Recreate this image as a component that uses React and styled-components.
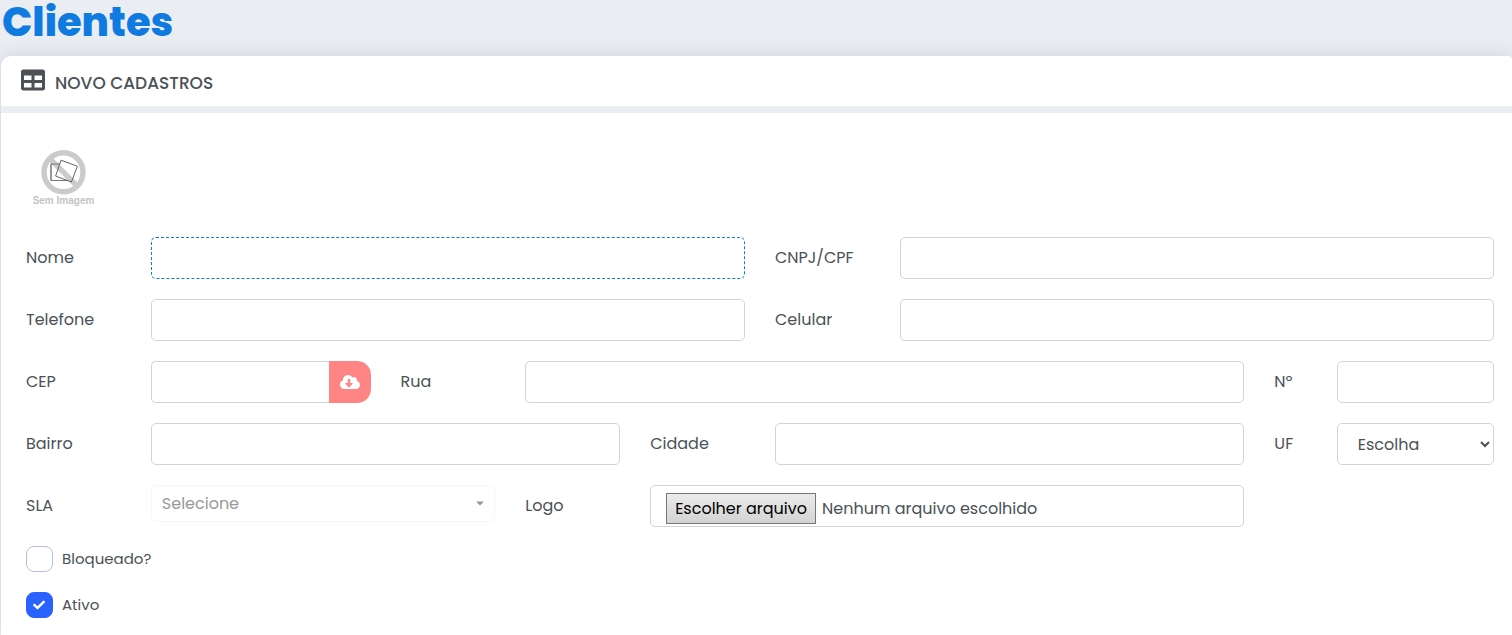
import React from "react";
import styled, { createGlobalStyle } from "styled-components";
import { FaTable, FaCloudDownloadAlt, FaCheck, FaCaretDown } from "react-icons/fa";

const theme = {
  page: "#eaedf2",
  white: "#ffffff",
  primary: "#0f7ae0",
  blue: "#2962ff",
  danger: "#ff8585",
  text: "#4b5157",
  border: "#ced4da",
  muted: "#999999",
};

const GlobalStyle = createGlobalStyle`
  *, *::before, *::after {
    box-sizing: border-box;
  }
  body {
    margin: 0;
    background: ${theme.page};
    color: ${theme.text};
    font-family: Poppins, Inter, "Liberation Sans", sans-serif;
    font-size: 16px;
    line-height: 24px;
  }
  input, select, button {
    font: inherit;
    color: inherit;
  }
`;

const PageTitle = styled.h1`
  margin: 0;
  padding: 0 2px 12px;
  color: ${theme.primary};
  font-size: 40px;
  font-weight: 800;
  line-height: 44px;
`;

const Card = styled.section`
  margin-left: 1px;
  border-radius: 10px 4px 0 0;
  background: ${theme.white};
  box-shadow: 0 0 20px rgba(8, 21, 66, 0.12);
`;

const CardHeader = styled.header`
  display: flex;
  align-items: center;
  gap: 10px;
  height: 57px;
  padding: 0 20px 2px;
  border-bottom: 7px solid ${theme.page};
`;

const CardTitle = styled.h2`
  margin: 0;
  padding-top: 6px;
  font-size: 17px;
  font-weight: 500;
  text-transform: uppercase;
`;

const CardBody = styled.form`
  padding: 34px 3px 17px 10px;
`;

const Picture = styled.svg`
  display: block;
  width: 66px;
  height: 66px;
  margin: 0 0 24px 20px;
`;

const Rows = styled.div`
  display: grid;
  gap: 20px;
`;

const Row = styled.div`
  display: grid;
  grid-template-columns: repeat(24, 1fr);
`;

const Cell = styled.div`
  grid-column: span ${({ span }) => span};
  display: flex;
  min-width: 0;
  height: 42px;
  padding: 0 15px;
`;

const FieldLabel = styled.label`
  grid-column: span ${({ span }) => span || 2};
  padding: 9px 0 9px 15px;
  white-space: nowrap;
`;

const Input = styled.input`
  flex: 1;
  min-width: 0;
  padding: 6px 15px;
  border: 1px solid ${theme.border};
  border-radius: ${({ joined }) => (joined ? "5px 0 0 5px" : "5px")};
  border-right-width: ${({ joined }) => (joined ? "0" : "1px")};
  background: ${theme.white};
  outline: none;

  &:focus {
    border: 1px dashed ${theme.primary};
  }
`;

const SearchButton = styled.button`
  display: flex;
  align-items: center;
  justify-content: center;
  width: 42px;
  padding: 0;
  border: 0;
  border-radius: 0 14px 14px 0;
  background: ${theme.danger};
  color: ${theme.white};
  cursor: pointer;

  svg {
    width: 20px;
    height: 16px;
  }
`;

const Select = styled.select`
  flex: 1;
  min-width: 0;
  padding: 6px 0 6px 16px;
  border: 1px solid ${theme.border};
  border-radius: 5px;
  background: ${theme.white};
`;

const PickerWrapper = styled.div`
  position: relative;
  flex: 1;
  height: 37px;
  color: ${theme.muted};

  svg {
    position: absolute;
    top: 12px;
    right: 10px;
    width: 10px;
    height: 12px;
    pointer-events: none;
  }
`;

const Picker = styled.select`
  width: 100%;
  height: 100%;
  padding: 0 10px;
  appearance: none;
  border: 1px solid #f6f6f6;
  border-radius: 5px;
  background: ${theme.white};
`;

const FileControl = styled.label`
  flex: 1;
  display: flex;
  align-items: center;
  gap: 6px;
  min-width: 0;
  padding: 5px 15px 0;
  border: 1px solid ${theme.border};
  border-radius: 5px;
  white-space: nowrap;
`;

const HiddenFile = styled.input`
  position: absolute;
  width: 1px;
  height: 1px;
  opacity: 0;
`;

const FileButton = styled.span`
  padding: 2px 8px;
  border: 1px solid #767676;
  background: linear-gradient(#ebebeb, #d3d3d3);
  color: #000000;
  line-height: 25px;
`;

const Checks = styled.div`
  display: grid;
  justify-items: start;
  gap: 20px;
  padding: 19px 15px 0;
`;

const CheckLabel = styled.label`
  display: flex;
  align-items: center;
  gap: 9px;
  height: 26px;
  font-size: 15px;
`;

const CheckBox = styled.span`
  position: relative;
  display: flex;

  svg {
    position: absolute;
    top: 7px;
    left: 7px;
    width: 12px;
    height: 12px;
    color: ${theme.white};
    pointer-events: none;
  }
`;

const Check = styled.input`
  width: 27px;
  height: 26px;
  margin: 0;
  appearance: none;
  border: 1px solid #b8bfe2;
  border-radius: 8px;
  background: ${theme.white};

  &:checked {
    border-color: ${theme.blue};
    background: ${theme.blue};
  }
`;

const NoImage = () => (
  <Picture viewBox="0 0 66 66" role="img" aria-label="Sem Imagem">
    <circle
      cx="32.5"
      cy="25.3"
      r="19.5"
      fill="none"
      stroke="#cbcbcb"
      strokeWidth="5.4"
    />
    <path d="M20 17h20v16.5H20z" fill="#fff" stroke="#777" />
    <path d="m30 13.2 16.4 6-6 15.8L24.6 29z" fill="#fff" />
    <path d="M19 11.8 46 38.8" stroke="#cbcbcb" strokeWidth="5.4" />
    <path d="M28 17h-8v16.5h17" fill="none" stroke="#777" />
    <path d="m30 13.2 16.4 6-6 15.8L24.6 29z" fill="none" stroke="#666" />
    <text
      x="32.5"
      y="57"
      textAnchor="middle"
      fill="#c4c4c4"
      fontFamily="Liberation Sans, sans-serif"
      fontSize="10"
      fontWeight="700"
    >
      Sem Imagem
    </text>
  </Picture>
);

const Field = ({ id, label, labelSpan, span, ...props }) => (
  <>
    <FieldLabel htmlFor={id} span={labelSpan}>
      {label}
    </FieldLabel>
    <Cell span={span}>
      <Input id={id} type="text" {...props} />
    </Cell>
  </>
);

const CheckField = ({ label, defaultChecked }) => {
  const [checked, setChecked] = React.useState(Boolean(defaultChecked));
  return (
    <CheckLabel>
      <CheckBox>
        <Check
          type="checkbox"
          checked={checked}
          onChange={(e) => setChecked(e.target.checked)}
        />
        {checked && <FaCheck />}
      </CheckBox>
      {label}
    </CheckLabel>
  );
};

const App = () => {
  const [fileName, setFileName] = React.useState("Nenhum arquivo escolhido");

  return (
    <main>
      <GlobalStyle />
      <PageTitle>Clientes</PageTitle>
      <Card>
        <CardHeader>
          <FaTable size={24} />
          <CardTitle>Novo Cadastros</CardTitle>
        </CardHeader>
        <CardBody onSubmit={(e) => e.preventDefault()}>
          <NoImage />
          <Rows>
            <Row>
              <Field id="nome" label="Nome" span={10} autoFocus />
              <Field id="documento" label="CNPJ/CPF" span={10} />
            </Row>
            <Row>
              <Field id="telefone" label="Telefone" span={10} />
              <Field id="celular" label="Celular" span={10} />
            </Row>
            <Row>
              <FieldLabel htmlFor="cep">CEP</FieldLabel>
              <Cell span={4}>
                <Input id="cep" type="text" joined="true" />
                <SearchButton type="button" aria-label="Buscar CEP">
                  <FaCloudDownloadAlt />
                </SearchButton>
              </Cell>
              <Field id="rua" label="Rua" span={12} />
              <Field id="numero" label="Nº" labelSpan={1} span={3} />
            </Row>
            <Row>
              <Field id="bairro" label="Bairro" span={8} />
              <Field id="cidade" label="Cidade" span={8} />
              <FieldLabel htmlFor="uf" span={1}>
                UF
              </FieldLabel>
              <Cell span={3}>
                <Select id="uf">
                  <option>Escolha</option>
                </Select>
              </Cell>
            </Row>
            <Row>
              <FieldLabel htmlFor="sla">SLA</FieldLabel>
              <Cell span={6}>
                <PickerWrapper>
                  <Picker id="sla">
                    <option>Selecione</option>
                  </Picker>
                  <FaCaretDown />
                </PickerWrapper>
              </Cell>
              <FieldLabel htmlFor="logo">Logo</FieldLabel>
              <Cell span={10}>
                <FileControl>
                  <HiddenFile
                    id="logo"
                    type="file"
                    onChange={(e) =>
                      setFileName(
                        e.target.files[0]?.name || "Nenhum arquivo escolhido"
                      )
                    }
                  />
                  <FileButton>Escolher arquivo</FileButton>
                  {fileName}
                </FileControl>
              </Cell>
            </Row>
          </Rows>
          <Checks>
            <CheckField label="Bloqueado?" />
            <CheckField label="Ativo" defaultChecked />
          </Checks>
        </CardBody>
      </Card>
    </main>
  );
};

export default App;
